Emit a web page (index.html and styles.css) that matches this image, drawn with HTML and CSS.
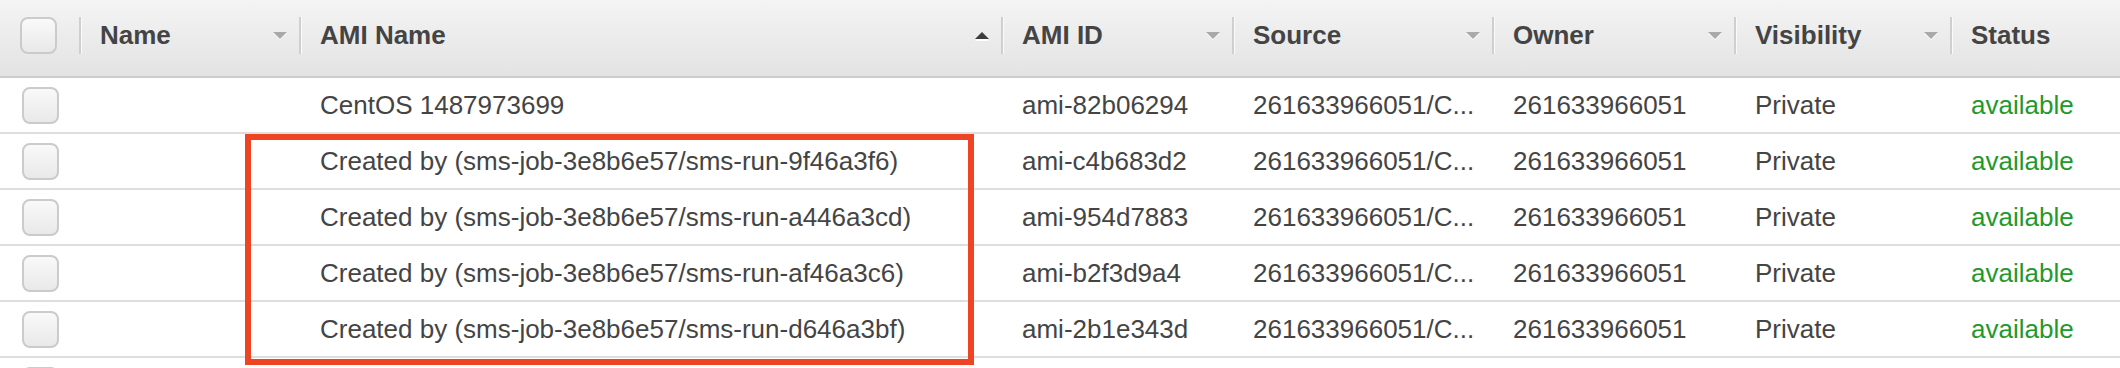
FILE: index.html
```html
<!DOCTYPE html>
<html lang="en">
<head>
    <meta charset="UTF-8">
    <meta name="viewport" content="width=device-width, initial-scale=1.0">
    <title>AMIs</title>
    <link rel="stylesheet" href="styles.css">
</head>
<body>
    <div class="table">
        <div class="head">
            <div class="cell check-cell"><span class="checkbox"></span></div>
            <div class="cell hcell"><span>Name</span><i class="sort"></i></div>
            <div class="cell hcell"><span>AMI Name</span><i class="sort up"></i></div>
            <div class="cell hcell"><span>AMI ID</span><i class="sort"></i></div>
            <div class="cell hcell"><span>Source</span><i class="sort"></i></div>
            <div class="cell hcell"><span>Owner</span><i class="sort"></i></div>
            <div class="cell hcell"><span>Visibility</span><i class="sort"></i></div>
            <div class="cell hcell"><span>Status</span></div>
        </div>

        <div class="row">
            <div class="cell check-cell"><span class="checkbox"></span></div>
            <div class="cell"></div>
            <div class="cell">CentOS 1487973699</div>
            <div class="cell">ami-82b06294</div>
            <div class="cell">261633966051/C...</div>
            <div class="cell">261633966051</div>
            <div class="cell">Private</div>
            <div class="cell status">available</div>
        </div>
        <div class="row">
            <div class="cell check-cell"><span class="checkbox"></span></div>
            <div class="cell"></div>
            <div class="cell">Created by (sms-job-3e8b6e57/sms-run-9f46a3f6)</div>
            <div class="cell">ami-c4b683d2</div>
            <div class="cell">261633966051/C...</div>
            <div class="cell">261633966051</div>
            <div class="cell">Private</div>
            <div class="cell status">available</div>
        </div>
        <div class="row">
            <div class="cell check-cell"><span class="checkbox"></span></div>
            <div class="cell"></div>
            <div class="cell">Created by (sms-job-3e8b6e57/sms-run-a446a3cd)</div>
            <div class="cell">ami-954d7883</div>
            <div class="cell">261633966051/C...</div>
            <div class="cell">261633966051</div>
            <div class="cell">Private</div>
            <div class="cell status">available</div>
        </div>
        <div class="row">
            <div class="cell check-cell"><span class="checkbox"></span></div>
            <div class="cell"></div>
            <div class="cell">Created by (sms-job-3e8b6e57/sms-run-af46a3c6)</div>
            <div class="cell">ami-b2f3d9a4</div>
            <div class="cell">261633966051/C...</div>
            <div class="cell">261633966051</div>
            <div class="cell">Private</div>
            <div class="cell status">available</div>
        </div>
        <div class="row">
            <div class="cell check-cell"><span class="checkbox"></span></div>
            <div class="cell"></div>
            <div class="cell">Created by (sms-job-3e8b6e57/sms-run-d646a3bf)</div>
            <div class="cell">ami-2b1e343d</div>
            <div class="cell">261633966051/C...</div>
            <div class="cell">261633966051</div>
            <div class="cell">Private</div>
            <div class="cell status">available</div>
        </div>
        <!-- next row only peeks in at the bottom edge -->
        <div class="row">
            <div class="cell check-cell"><span class="checkbox"></span></div>
        </div>

        <!-- highlight drawn over the SMS rows -->
        <div class="highlight"></div>
    </div>
</body>
</html>
```

FILE: styles.css
```css
body {
    margin: 0;
    background-color: #fff;
    font-family: "Liberation Sans", Arial, sans-serif;
    font-size: 26px;
    color: #444;
    overflow: hidden;
}
.table {
    position: relative;
    height: 368px;
    overflow: hidden;
}
.head, .row {
    display: grid;
    grid-template-columns: 79px 220px 702px 231px 260px 242px 216px 1fr;
    align-items: center;
}
.head {
    height: 70px;
    padding-bottom: 6px;
    background: linear-gradient(#f4f4f4, #e3e3e3);
    border-bottom: 2px solid #cdcdcd;
}
.row {
    height: 54px;
    border-bottom: 2px solid #dedede;
}
.cell {
    padding-left: 21px;
    white-space: nowrap;
}
.check-cell {
    padding-left: 22px;
    display: flex;
}
.head .check-cell {
    padding-left: 20px;
}
.checkbox {
    display: block;
    width: 33px;
    height: 33px;
    border: 2px solid #cbcbcb;
    border-radius: 8px;
    background: linear-gradient(#f9f9f9, #e9e9e9);
}
.hcell {
    display: flex;
    align-items: center;
    justify-content: space-between;
    height: 37px;
    padding-left: 19px;
    padding-right: 12px;
    border-left: 2px solid #cfcfcf;
    box-shadow: inset 1px 0 0 #fafafa;
    font-weight: bold;
}
.sort {
    width: 0;
    height: 0;
    border-left: 7px solid transparent;
    border-right: 7px solid transparent;
    border-top: 7px solid #a9a9a9;
    filter: drop-shadow(0 1px 0 #fff);
}
.sort.up {
    border-top: none;
    border-bottom: 7px solid #3c3c3c;
    filter: drop-shadow(0 2px 0 #fff);
}
.status {
    color: #1e9a2c;
}
.highlight {
    position: absolute;
    left: 245px;
    top: 134px;
    width: 729px;
    height: 231px;
    box-sizing: border-box;
    border: 6px solid #ee4424;
}
```
